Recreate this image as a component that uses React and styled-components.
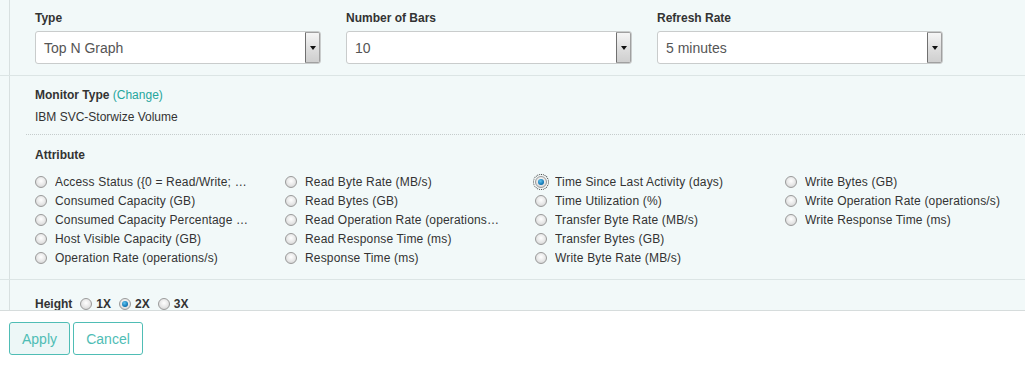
import React from "react";
import styled, { createGlobalStyle } from "styled-components";

const GlobalStyle = createGlobalStyle`
  html, body {
    margin: 0;
    padding: 0;
    background: #ffffff;
    font-family: "Liberation Sans", Arial, sans-serif;
    color: #333333;
  }
`;

const Page = styled.div`
  width: 1025px;
  height: 367px;
  display: flex;
  flex-direction: column;
  overflow: hidden;
`;

const Body = styled.div`
  height: 310px;
  overflow: hidden;
  background: #f2f9f9;
`;

const Section = styled.div`
  border-bottom: 1px solid #dce5e5;
`;

// Inner column with the thin rule on the left.
const Inner = styled.div`
  margin-left: 9px;
  border-left: 1px solid #d8e0e0;
  padding: ${({ $pad }) => $pad || "10px 0 11px 25px"};
`;

const FieldRow = styled.div`
  display: grid;
  grid-template-columns: repeat(3, 311px);
`;

const Field = styled.div`
  display: flex;
  flex-direction: column;
`;

const Label = styled.div`
  font-size: 12px;
  font-weight: bold;
  line-height: 16px;
  margin-bottom: ${({ $mb }) => $mb || "5px"};
  color: #333;
`;

const Select = styled.div`
  width: 286px;
  height: 33px;
  box-sizing: border-box;
  background: #fff;
  border: 1px solid #c9cccc;
  border-radius: 3px;
  display: flex;
  align-items: center;
  justify-content: space-between;
  padding-left: 8px;
`;

const SelectText = styled.span`
  font-size: 14px;
  color: #555;
`;

const SelectButton = styled.span`
  width: 15px;
  height: 31px;
  box-sizing: border-box;
  border-left: 1px solid #707070;
  border-right: 1px solid #a0a0a0;
  border-top: 1px solid #a0a0a0;
  border-bottom: 1px solid #a0a0a0;
  border-radius: 0 2px 2px 0;
  background: linear-gradient(#f6f6f6, #dcdcdc 60%, #cfcfcf);
  display: flex;
  align-items: center;
  justify-content: center;
  &::after {
    content: "";
    border-left: 3.5px solid transparent;
    border-right: 3.5px solid transparent;
    border-top: 4px solid #111;
  }
`;

const Change = styled.span`
  font-weight: normal;
  color: #26a69d;
`;

const Plain = styled.div`
  font-size: 12px;
  line-height: 16px;
  color: #333;
  margin-top: 6px;
`;

const DottedBlock = styled.div`
  margin-left: 16px;
  border-top: 1px dotted #c5cccc;
  margin-top: 9px;
  padding: 12px 0 0 9px;
`;

const RadioGrid = styled.div`
  display: grid;
  grid-template-columns: repeat(4, 250px);
  grid-auto-flow: column;
  grid-template-rows: repeat(5, 19px);
  margin-top: 9px;
`;

const Option = styled.label`
  display: flex;
  align-items: center;
  font-size: 12px;
  letter-spacing: ${({ $bold }) => ($bold ? "0" : "0.17px")};
  color: #333;
  white-space: nowrap;
  font-weight: ${({ $bold }) => ($bold ? "bold" : "normal")};
`;

const Radio = styled.span`
  width: 12px;
  height: 12px;
  box-sizing: border-box;
  border-radius: 50%;
  border: 1px solid #9a9a9a;
  background: radial-gradient(circle at 50% 40%, #ffffff 0%, #e6e6e6 55%, #c8c8c8 100%);
  flex-shrink: 0;
  margin-right: ${({ $gap }) => $gap || "8px"};
  display: flex;
  align-items: center;
  justify-content: center;
  outline: ${({ $focus }) => ($focus ? "1px dotted #333" : "none")};
  outline-offset: 1px;
  &::after {
    content: "";
    display: ${({ $checked }) => ($checked ? "block" : "none")};
    width: 6px;
    height: 6px;
    border-radius: 50%;
    background: radial-gradient(circle at 40% 35%, #5fc4f0, #0a6fae 70%, #064d7a);
  }
`;

const OptionText = styled.span`
  max-width: ${({ $wide }) => ($wide ? "none" : "195px")};
  overflow: hidden;
  text-overflow: ellipsis;
`;

const HeightRow = styled.div`
  display: flex;
  align-items: center;
  gap: 8px;
`;

const Footer = styled.div`
  flex: 1;
  border-top: 1px solid #d6dcdc;
  background: #fff;
  display: flex;
  align-items: flex-start;
  gap: 3px;
  padding: 11px 0 0 9px;
`;

const Button = styled.button`
  width: ${({ $w }) => $w};
  height: 33px;
  padding: 0;
  border: 1px solid #4fbdb5;
  border-radius: 3px;
  background: ${({ $primary }) => ($primary ? "#edf7f7" : "#ffffff")};
  color: #4fbdb5;
  font-family: "Liberation Sans", Arial, sans-serif;
  font-size: 14px;
  cursor: pointer;
`;

const attributes = [
  "Access Status ({0 = Read/Write; 1 = Read Only})",
  "Consumed Capacity (GB)",
  "Consumed Capacity Percentage (%)",
  "Host Visible Capacity (GB)",
  "Operation Rate (operations/s)",
  "Read Byte Rate (MB/s)",
  "Read Bytes (GB)",
  "Read Operation Rate (operations/s)",
  "Read Response Time (ms)",
  "Response Time (ms)",
  "Time Since Last Activity (days)",
  "Time Utilization (%)",
  "Transfer Byte Rate (MB/s)",
  "Transfer Bytes (GB)",
  "Write Byte Rate (MB/s)",
  "Write Bytes (GB)",
  "Write Operation Rate (operations/s)",
  "Write Response Time (ms)",
];

const selected = "Time Since Last Activity (days)";

const fields = [
  { label: "Type", value: "Top N Graph" },
  { label: "Number of Bars", value: "10" },
  { label: "Refresh Rate", value: "5 minutes" },
];

export default function App() {
  return (
    <Page>
      <GlobalStyle />
      <Body>
        <Section>
          <Inner>
            <FieldRow>
              {fields.map((f) => (
                <Field key={f.label}>
                  <Label>{f.label}</Label>
                  <Select>
                    <SelectText>{f.value}</SelectText>
                    <SelectButton />
                  </Select>
                </Field>
              ))}
            </FieldRow>
          </Inner>
        </Section>

        <Section>
          <Inner $pad="11px 0 12px 0">
            <div style={{ paddingLeft: 25 }}>
              <Label $mb="0">
                Monitor Type <Change>(Change)</Change>
              </Label>
              <Plain>IBM SVC-Storwize Volume</Plain>
            </div>
            <DottedBlock>
              <Label $mb="0">Attribute</Label>
              <RadioGrid>
                {attributes.map((a, i) => (
                  <Option key={a}>
                    <Radio $checked={a === selected} $focus={a === selected} />
                    <OptionText $wide={i >= 15}>{a}</OptionText>
                  </Option>
                ))}
              </RadioGrid>
            </DottedBlock>
          </Inner>
        </Section>

        <Section>
          <Inner $pad="16px 0 10px 25px">
            <HeightRow>
              <Label $mb="0">Height</Label>
              {["1X", "2X", "3X"].map((h) => (
                <Option key={h} $bold>
                  <Radio $checked={h === "2X"} $gap="4px" />
                  {h}
                </Option>
              ))}
            </HeightRow>
          </Inner>
        </Section>
      </Body>

      <Footer>
        <Button $primary $w="61px">Apply</Button>
        <Button $w="70px">Cancel</Button>
      </Footer>
    </Page>
  );
}
